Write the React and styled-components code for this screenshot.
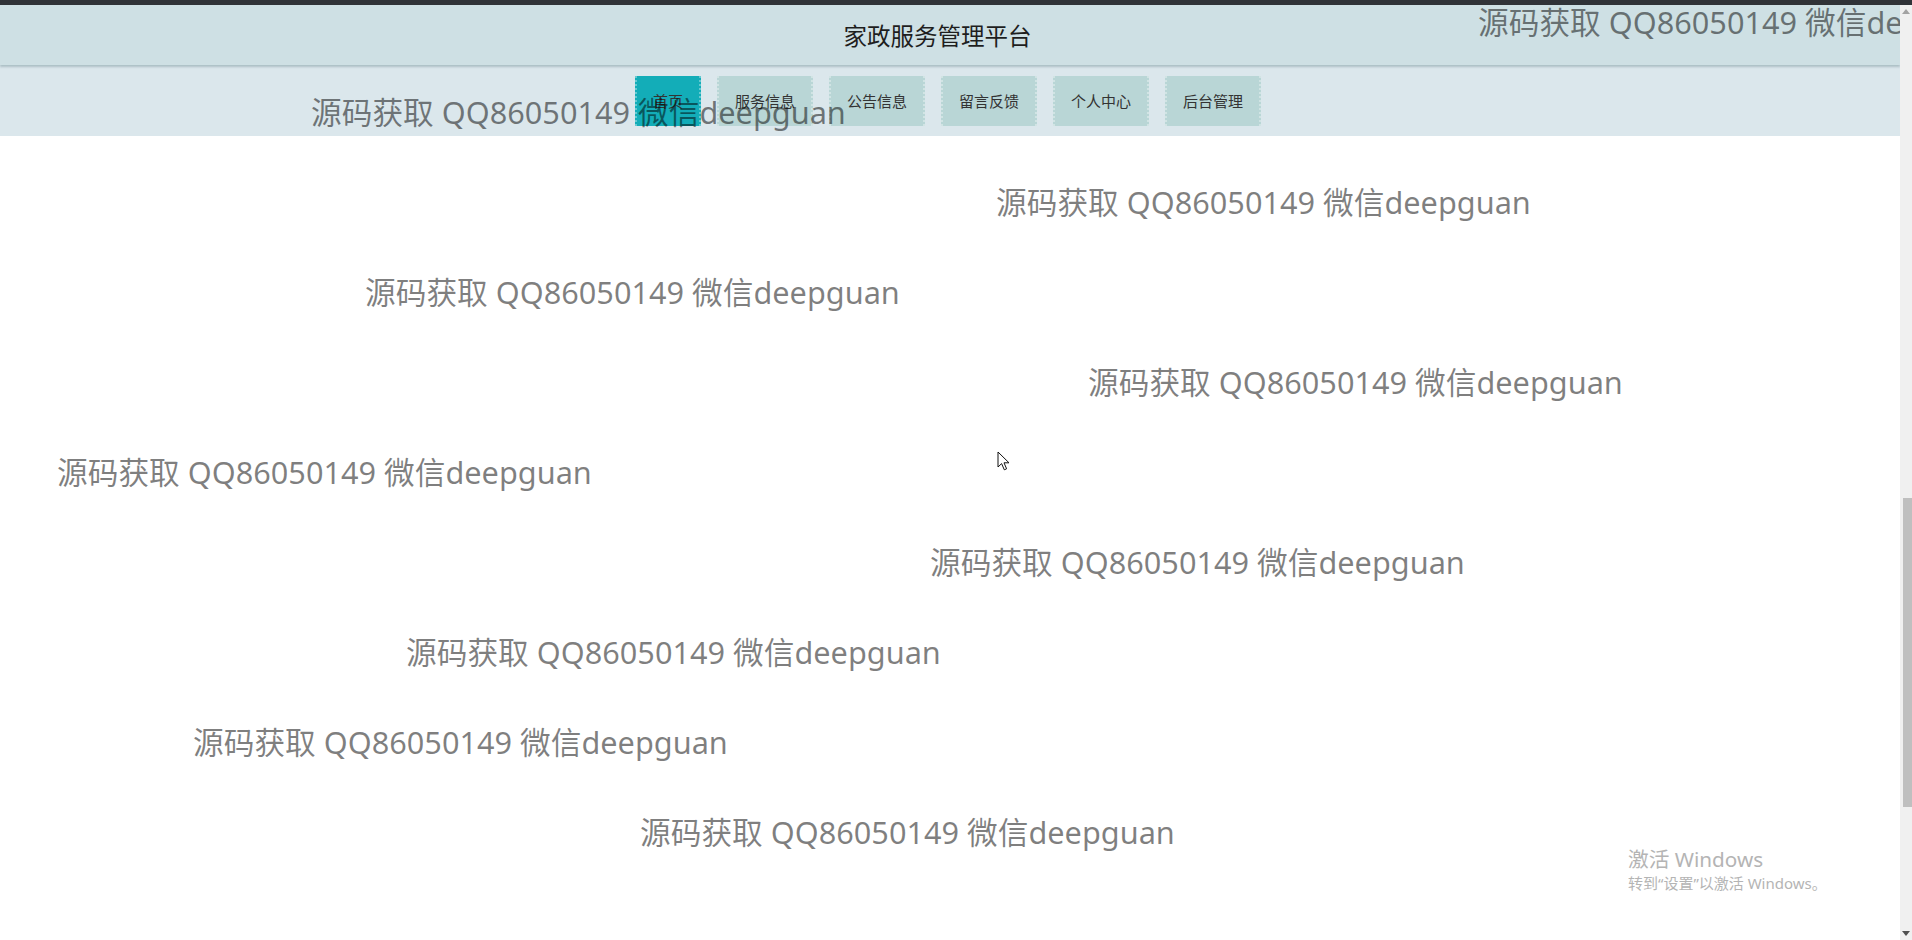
import React from 'react';
import styled, { createGlobalStyle } from 'styled-components';

const GlobalStyle = createGlobalStyle`
  html, body {
    margin: 0;
    padding: 0;
    overflow: hidden;
    background: #fff;
  }
  body {
    font-family: "Noto Sans", "Noto Sans CJK SC", sans-serif;
  }
`;

const navItems = ['首页', '服务信息', '公告信息', '留言反馈', '个人中心', '后台管理'];

// left offset of every watermark line, top to bottom
const marks = [1478, 311, 996, 365, 1088, 57, 930, 406, 193, 640];
const markText = '源码获取 QQ86050149 微信deepguan';

const App = () => {
  return (
    <Screen>
      <GlobalStyle />
      <TopStrip />
      <Body>
        <Main>
          <Header>
            <Title>家政服务管理平台</Title>
          </Header>
          <Nav>
            {navItems.map((item, i) => (
              <NavButton key={item} active={i === 0}>
                {item}
              </NavButton>
            ))}
          </Nav>
          <Content />

          <Watermarks>
            {marks.map((x, i) => (
              <MarkRow key={i}>
                <Mark style={{ marginLeft: x }}>{markText}</Mark>
              </MarkRow>
            ))}
          </Watermarks>

          <Activate>
            <ActivateTitle>激活 Windows</ActivateTitle>
            <ActivateSub>转到“设置”以激活 Windows。</ActivateSub>
          </Activate>

          <Cursor width='14' height='21' viewBox='0 0 14 21'>
            <path
              d='M1 1 L1 16 L4.6 12.6 L7.3 18.8 L9.6 17.8 L7 11.8 L12 11.8 Z'
              fill='#fff'
              stroke='#111'
              strokeWidth='1'
              strokeLinejoin='round'
            />
          </Cursor>
        </Main>

        <Scrollbar>
          <Arrow viewBox='0 0 8 5' width='8' height='5'>
            <path d='M0 5 L4 0 L8 5 Z' fill='#a3a3a3' />
          </Arrow>
          <Thumb />
          <Arrow viewBox='0 0 8 5' width='8' height='5' bottom>
            <path d='M0 0 L4 5 L8 0 Z' fill='#505050' />
          </Arrow>
        </Scrollbar>
      </Body>
    </Screen>
  );
};

const Screen = styled.div`
  height: 100vh;
  display: flex;
  flex-direction: column;
`;

const TopStrip = styled.div`
  height: 5px;
  background: #303338;
  flex-shrink: 0;
`;

const Body = styled.div`
  flex: 1;
  display: flex;
  min-height: 0;
`;

const Main = styled.div`
  flex: 1;
  position: relative;
  overflow: hidden;
  display: flex;
  flex-direction: column;
  background: #fff;
`;

const Header = styled.div`
  height: 60px;
  flex-shrink: 0;
  display: flex;
  align-items: center;
  justify-content: center;
  padding-right: 25px;
  background: #cee0e4;
  box-shadow: 0 2px 2px rgba(90, 120, 125, 0.35);
  position: relative;
  z-index: 1;
`;

const Title = styled.h1`
  margin: 0;
  font-family: "Noto Sans CJK SC", sans-serif;
  font-size: 23.5px;
  font-weight: 400;
  color: #1e1e1e;
`;

const Nav = styled.div`
  height: 71px;
  flex-shrink: 0;
  display: flex;
  align-items: center;
  justify-content: center;
  gap: 16px;
  padding-right: 4px;
  background: #dbe7ec;
`;

const NavButton = styled.div`
  height: 50px;
  box-sizing: border-box;
  padding: 0 16px;
  display: flex;
  align-items: center;
  font-family: "Noto Sans CJK SC", sans-serif;
  font-size: 15px;
  color: #333;
  background: ${(p) => (p.active ? '#13adb8' : '#b9d6d6')};
  border-left: 2px dotted rgba(255, 255, 255, 0.35);
  border-right: 2px dotted rgba(255, 255, 255, 0.35);
`;

const Content = styled.div`
  flex: 1;
`;

const Watermarks = styled.div`
  position: absolute;
  top: -28px;
  left: 0;
  right: 0;
  display: flex;
  flex-direction: column;
  pointer-events: none;
  z-index: 5;
`;

const MarkRow = styled.div`
  height: 90px;
  display: flex;
  align-items: center;
  white-space: nowrap;
`;

const Mark = styled.span`
  font-family: "Noto Sans", "Noto Sans CJK SC", sans-serif;
  font-size: 30.7px;
  line-height: 1;
  color: rgba(0, 0, 0, 0.5);
`;

const Activate = styled.div`
  position: absolute;
  left: 1628px;
  top: 841px;
  color: #b4b4b4;
  font-family: "Noto Sans", "Noto Sans CJK SC", sans-serif;
  z-index: 6;
`;

const ActivateTitle = styled.div`
  font-size: 20.7px;
  line-height: 27px;
`;

const ActivateSub = styled.div`
  font-size: 15px;
  line-height: 20px;
`;

const Cursor = styled.svg`
  position: absolute;
  left: 997px;
  top: 446px;
  z-index: 7;
`;

const Scrollbar = styled.div`
  width: 12px;
  flex-shrink: 0;
  background: #f0f0f0;
  display: flex;
  flex-direction: column;
  align-items: center;
`;

const Arrow = styled.svg`
  margin-top: ${(p) => (p.bottom ? 'auto' : '4px')};
  margin-bottom: ${(p) => (p.bottom ? '4px' : '0')};
`;

const Thumb = styled.div`
  width: 9px;
  margin-left: 2px;
  margin-top: 484px;
  height: 309px;
  background: #bfbfbf;
`;

export default App;
